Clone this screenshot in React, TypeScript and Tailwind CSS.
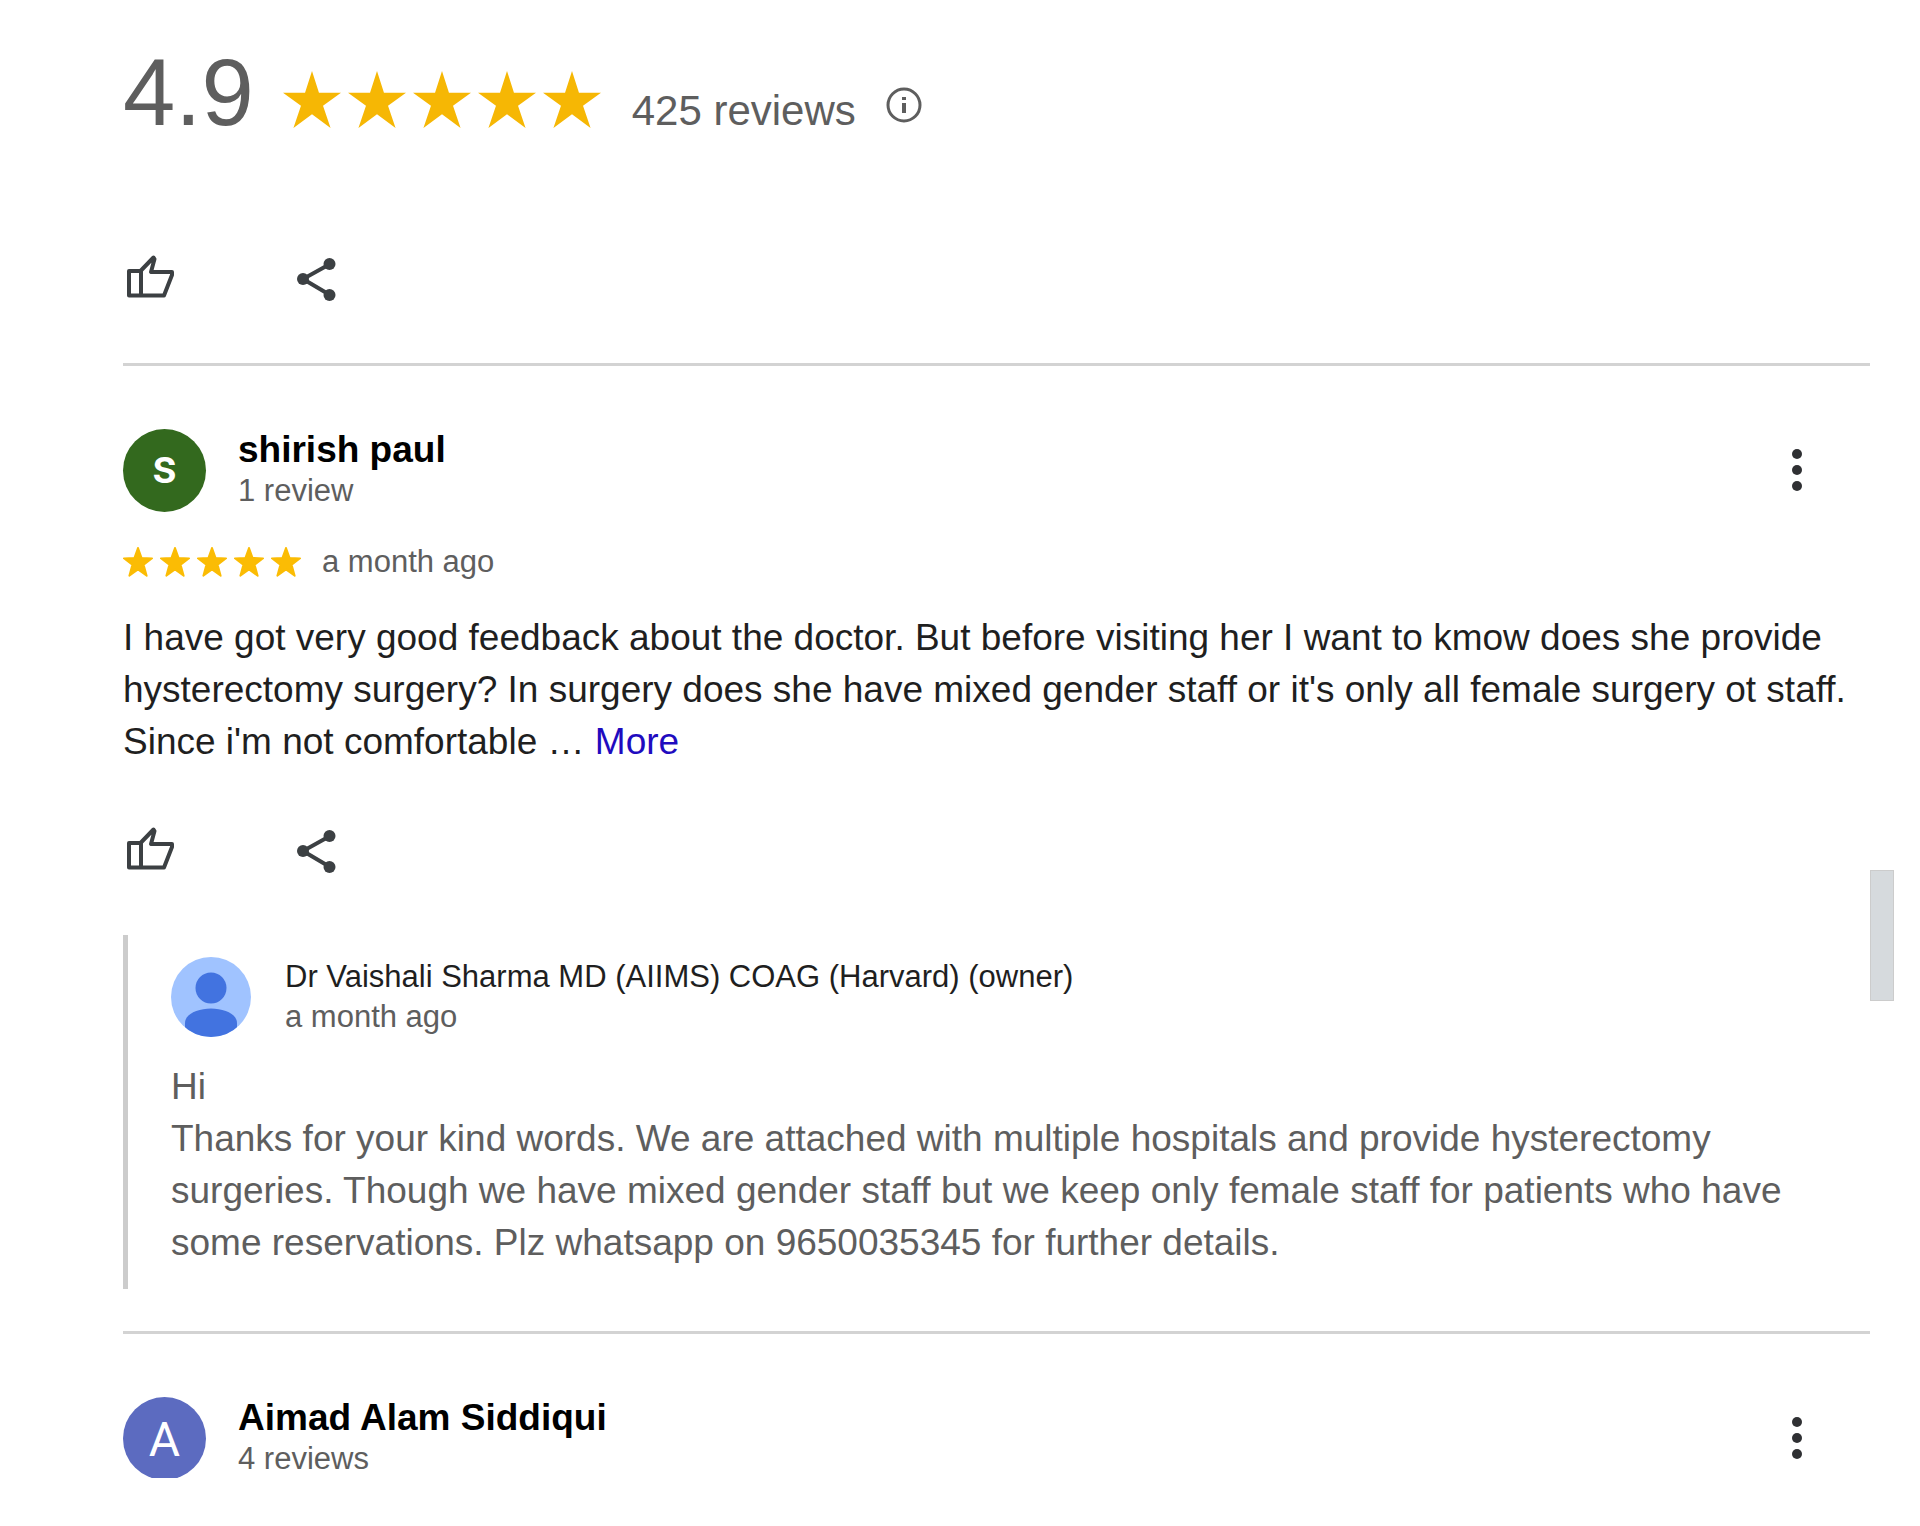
import type { ReactNode } from "react";

const Stars = ({ size }: { size: "lg" | "sm" }) => {
    const points = size === "lg"
        ? "50,0 62,38 100,38 69,61 82,100 50,76 18,100 31,61 0,38 38,38"
        : "50,3 62,36 97,38 69,59 79,96 50,75 21,96 31,59 3,38 38,36";
    return (
        <div role="img" aria-label="5 out of 5 stars" className="flex gap-[7px]">
            {[1, 2, 3, 4, 5].map((n) => (
                <svg key={n} viewBox="0 0 100 100" preserveAspectRatio="none" className={size === "lg" ? "h-[57px] w-[58px]" : "h-[30px] w-[30px]"}>
                    <polygon points={points} fill={size === "lg" ? "#f6b704" : "#fbbc04"} stroke="#fbbc04" strokeWidth={size === "lg" ? 0 : 6} strokeLinejoin="round" />
                </svg>
            ))}
        </div>
    );
};

const Actions = () => (
    <div className="flex gap-[118px]">
        <button type="button" aria-label="Helpful" className="h-[54px] w-[54px]">
            <svg viewBox="0 0 54 54" className="h-full w-full" fill="none" stroke="#3c4043" strokeWidth="4" strokeLinejoin="round">
                <path d="M6 19H17.500L30.500 5.500L31.500 7L28 20H49V23L41 43.500H6ZM18 19V43" />
            </svg>
        </button>
        <button type="button" aria-label="Share" className="h-[54px] w-[54px]">
            <svg viewBox="0 0 54 54" className="h-full w-full" fill="#3c4043">
                <path d="M35 12L8 27L35 43" fill="none" stroke="#3c4043" strokeWidth="4" />
                <circle cx="34.500" cy="12" r="6" />
                <circle cx="8" cy="27" r="6" />
                <circle cx="34.500" cy="43" r="6" />
            </svg>
        </button>
    </div>
);

const Reviewer = ({ name, count, avatar }: { name: string; count: string; avatar: ReactNode }) => (
    <div className="flex items-start">
        {avatar}
        <div className="ml-[32px] flex-1">
            <h2 className="text-[37px] leading-[42px] font-bold text-black">{name}</h2>
            <p className="text-[31px] leading-[40px] text-[#5e5e5e]">{count}</p>
        </div>
        <button type="button" aria-label={"More options for " + name} className="mt-[14px] mr-[46px] h-[54px] w-[54px]">
            <svg viewBox="0 0 54 54" className="h-full w-full" fill="#2f3033">
                <circle cx="27" cy="11" r="5" />
                <circle cx="27" cy="27" r="5" />
                <circle cx="27" cy="43" r="5" />
            </svg>
        </button>
    </div>
);

export default function App() {
    return (
        <div className="flex items-start bg-white pr-[26px] font-['Liberation_Sans',Arial,sans-serif]">
            <main className="min-w-0 flex-1 pl-[123px]">

                {/* rating summary */}
                <header className="flex pt-[41px]">
                    <span className="text-[94px] leading-[104px] text-[#5e5e5e]">4.9</span>
                    <div className="mt-[30px] ml-[29px]"><Stars size="lg" /></div>
                    <span className="mt-[45px] ml-[31px] text-[42px] leading-[50px] text-[#5e5e5e]">425 reviews</span>
                    <button type="button" aria-label="About ratings" className="mt-[46px] ml-[30px] h-[36px] w-[36px]">
                        <svg viewBox="0 0 36 36" className="h-full w-full" fill="none" stroke="#5e5e5e">
                            <circle cx="18" cy="18" r="16" strokeWidth="3" />
                            <path d="M18 16V26M18 10V13" strokeWidth="4" />
                        </svg>
                    </button>
                </header>

                <div className="mt-[107px]"><Actions /></div>
                <hr className="mt-[57px] border-t-[3px] border-[#d3d3d3]" />

                {/* first review */}
                <article className="pt-[63px]">
                    <Reviewer
                        name="shirish paul"
                        count="1 review"
                        avatar={<div className="flex h-[83px] w-[83px] items-center justify-center rounded-full bg-[#33691e] pb-[8px] font-['Roboto'] text-[48px] leading-none font-medium text-white">s</div>}
                    />
                    <div className="mt-[30px] flex items-center gap-[21px]">
                        <Stars size="sm" />
                        <span className="text-[31px] leading-[40px] text-[#5e5e5e]">a month ago</span>
                    </div>
                    <p className="mt-[30px] mr-[24px] text-[37px] leading-[52px] text-[#1f1f1f]">
                        I have got very good feedback about the doctor. But before visiting her I want to kmow does she provide hysterectomy surgery? In surgery does she have mixed gender staff or it's only all female surgery ot staff. Since i'm not comfortable … <a href="#more" className="text-[#1f0bbf]">More</a>
                    </p>
                    <div className="mt-[56px]"><Actions /></div>

                    {/* owner reply */}
                    <section className="mt-[57px] border-l-[5px] border-[#cccccc] pt-[22px] pb-[20px] pl-[43px]">
                        <div className="flex">
                            <svg viewBox="0 0 80 80" className="h-[80px] w-[80px]">
                                <defs>
                                    <clipPath id="person"><circle cx="40" cy="40" r="40" /></clipPath>
                                </defs>
                                <g clipPath="url(#person)">
                                    <rect width="80" height="80" fill="#a0c3ff" />
                                    <circle cx="40" cy="31" r="15.500" fill="#4273e0" />
                                    <path d="M14 80V66C14 57 27 51.500 40 51.500S66 57 66 66V80Z" fill="#4273e0" />
                                </g>
                            </svg>
                            <div className="ml-[34px]">
                                <h3 className="text-[31px] leading-[40px] text-[#1f1f1f]">Dr Vaishali Sharma MD (AIIMS) COAG (Harvard) (owner)</h3>
                                <p className="text-[31px] leading-[40px] text-[#5e5e5e]">a month ago</p>
                            </div>
                        </div>
                        <p className="mt-[24px] mr-[24px] text-[37px] leading-[52px] text-[#5e5e5e]">
                            Hi<br />
                            Thanks for your kind words. We are attached with multiple hospitals and provide hysterectomy surgeries. Though we have mixed gender staff but we keep only female staff for patients who have some reservations. Plz whatsapp on 9650035345 for further details.
                        </p>
                    </section>
                </article>
                <hr className="mt-[42px] border-t-[3px] border-[#d3d3d3]" />

                {/* second review */}
                <article className="pt-[63px]">
                    <Reviewer
                        name="Aimad Alam Siddiqui"
                        count="4 reviews"
                        avatar={
                            <div className="h-[81px] overflow-hidden">
                                <div className="flex h-[83px] w-[83px] items-center justify-center rounded-full bg-[#5c6bc0] pt-[3px] font-['Roboto'] text-[48px] leading-none text-white">A</div>
                            </div>
                        }
                    />
                </article>
            </main>

            {/* scrollbar thumb */}
            <div className="mt-[870px] h-[131px] w-[24px] border border-[#cccccc] bg-[#d6dadd]"></div>
        </div>
    );
}
